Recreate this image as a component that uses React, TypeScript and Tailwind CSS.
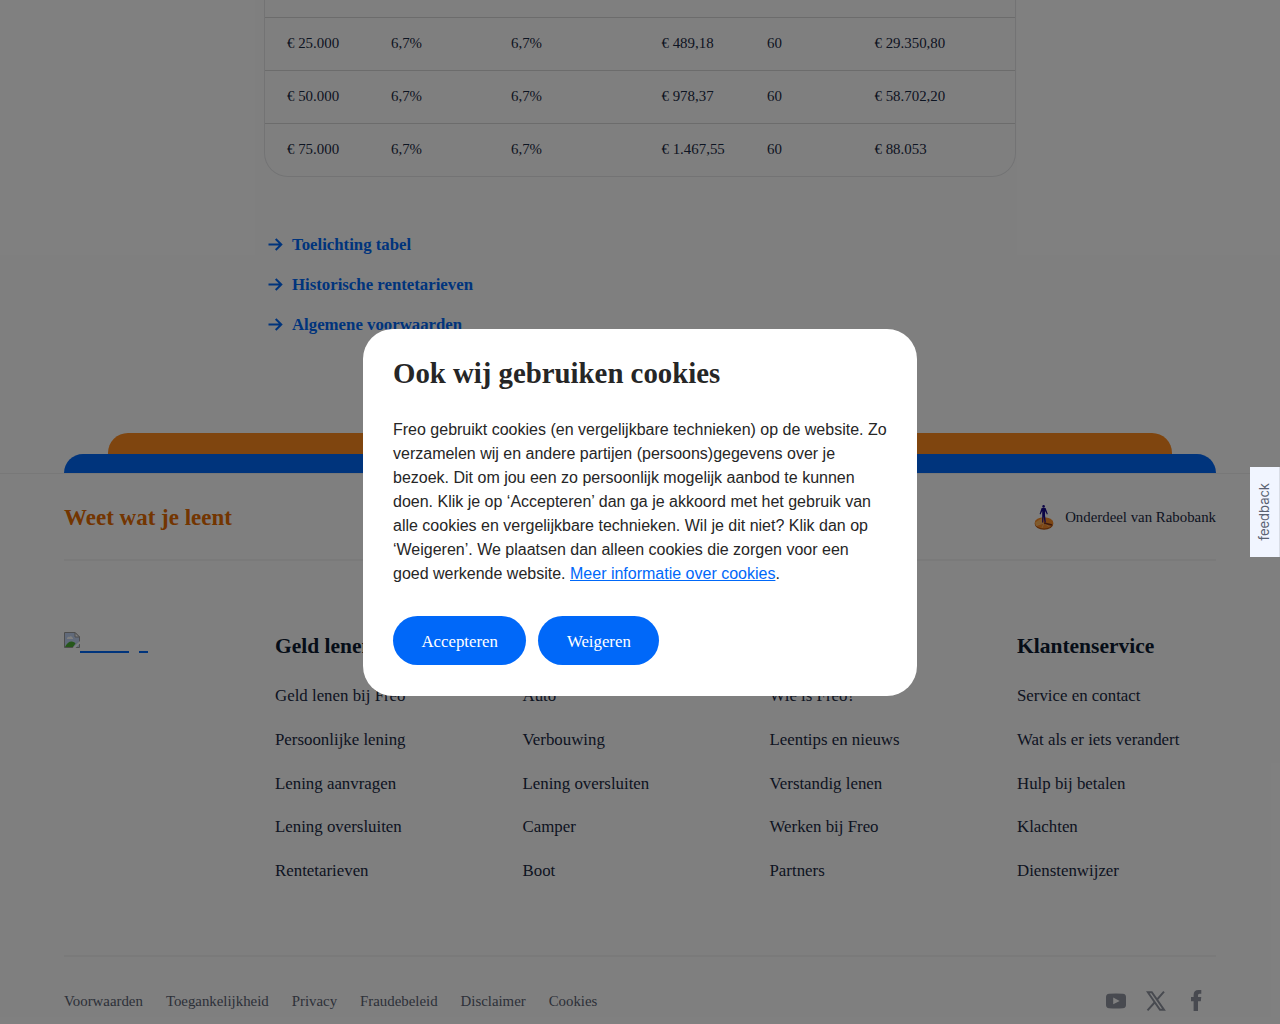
import React from "react";

const rows = [
  ["€ 25.000", "6,7%", "6,7%", "€ 489,18", "60", "€ 29.350,80"],
  ["€ 50.000", "6,7%", "6,7%", "€ 978,37", "60", "€ 58.702,20"],
  ["€ 75.000", "6,7%", "6,7%", "€ 1.467,55", "60", "€ 88.053"],
];

const links = ["Toelichting tabel", "Historische rentetarieven", "Algemene voorwaarden"];

const columns = [
  { title: "Geld lenen", items: ["Geld lenen bij Freo", "Persoonlijke lening", "Lening aanvragen", "Lening oversluiten", "Rentetarieven"] },
  { title: "Leendoelen", items: ["Auto", "Verbouwing", "Lening oversluiten", "Camper", "Boot"] },
  { title: "Over Freo", items: ["Wie is Freo?", "Leentips en nieuws", "Verstandig lenen", "Werken bij Freo", "Partners"] },
  { title: "Klantenservice", items: ["Service en contact", "Wat als er iets verandert", "Hulp bij betalen", "Klachten", "Dienstenwijzer"] },
];

const legal = ["Voorwaarden", "Toegankelijkheid", "Privacy", "Fraudebeleid", "Disclaimer", "Cookies"];

function Arrow() {
  return (
    <svg width="16" height="14" viewBox="0 0 16 14" fill="none" stroke="#0068f9" strokeWidth="2">
      <path d="M0.5 6.5H13.5M7.7 1L13.3 6.5L7.7 12" />
    </svg>
  );
}

function RabobankLogo() {
  return (
    <svg width="20" height="26" viewBox="0 0 20 26">
      <ellipse cx="10" cy="18.8" rx="9.3" ry="6" fill="#b4520e" />
      <ellipse cx="10" cy="17.8" rx="9.3" ry="5.6" fill="#fb8c28" />
      <path d="M1.2 17.5L8 13L8.5 18L2 21Z" fill="#ffb75c" />
      <path d="M10 18L15.5 22M10 18L8 23M10 18L2.5 20.5" stroke="#ffc68a" strokeWidth="0.6" />
      <path d="M10 18L18 20" stroke="#7b3018" strokeWidth="1.6" />
      <circle cx="9.6" cy="1.4" r="1.3" fill="#180a8c" />
      <path d="M7.6 3H11.6L13.8 9L12.9 9.6L11.2 6L11 10L11.8 17.5H10.6L9.6 11.5L9.1 17.5H8.2L8.2 10V6L6.5 9.6L5.6 9Z" fill="#180a8c" />
    </svg>
  );
}

function MissingImage() {
  return (
    <svg width="16" height="16" viewBox="0 0 16 16">
      <path d="M0.5 0.5H11L15.5 5V15.5H0.5Z" fill="#c2d5f5" stroke="#9a9a9a" />
      <path d="M3 6.5C3 4.8 5 4.6 5.4 5C6 3.6 8 4 8.2 5.6C9 5.6 9.2 6.5 9 7H3Z" fill="#fff" />
      <path d="M1 15C2.5 11.5 5 9.5 7.5 9.5C9.5 9.5 11 10.5 11.5 11.5L9 15Z" fill="#4caf36" />
      <path d="M11 0.5V5H15.5Z" fill="#fff" stroke="#9a9a9a" />
      <path d="M8.5 16L16 9V11.5L11.5 16Z" fill="#fff" />
    </svg>
  );
}

export default function App() {
  return (
    <div className="relative h-[1024px] w-[1280px] overflow-hidden bg-white font-['Liberation_Serif',serif] text-[#1b2a44]">
      <section className="h-[473px]">
        <div className="mx-auto h-[177px] w-[752px] overflow-hidden rounded-b-3xl border border-t-0 border-[#e6e7e9]">
          <div className="h-[17px]" />
          {rows.map((row) => (
            <div
              key={row[0]}
              className="grid h-[53px] grid-cols-[104px_120px_150.5px_105.5px_107.5px_1fr] items-center border-t border-[#d8d8d8] pb-0.5 pl-[22px] text-[14.9px] leading-6"
            >
              {row.map((cell, i) => (
                <span key={i}>{cell}</span>
              ))}
            </div>
          ))}
        </div>
        <div className="mt-[48px] flex flex-col pl-[268px]">
          {links.map((l) => (
            <a key={l} className="flex h-10 items-center gap-2 text-[16.8px] font-bold text-[#0068f9]">
              <Arrow />
              <span>{l}</span>
            </a>
          ))}
        </div>
        <div className="mx-[108px] mt-[88px] h-[20.5px] rounded-t-[20px] bg-[#ff8a1e]" />
        <div className="mx-16 h-[19.5px] rounded-t-[20px] bg-[#0068f9]" />
      </section>

      <footer className="h-[551px] border-t border-[#f0f0f0] px-16">
        <div className="flex h-[87px] items-center justify-between border-b-2 border-[#f5f5f5]">
          <h2 className="pt-[3px] text-[23px] font-bold text-[#e66a00]">Weet wat je leent</h2>
          <div className="flex items-center gap-[11px] pt-0.5 text-[14.85px]">
            <RabobankLogo />
            <span>Onderdeel van Rabobank</span>
          </div>
        </div>
        <div className="grid h-[396px] grid-cols-[211px_247.5px_247px_247.5px_1fr] border-b-2 border-[#f5f5f5] pt-[70px]">
          <div className="flex items-start pt-px">
            <MissingImage />
            <div className="mt-[19px] flex gap-[10px]">
              <div className="h-[1.5px] w-[49px] bg-[#0068f9]" />
              <div className="h-[1.5px] w-[9px] bg-[#0068f9]" />
            </div>
          </div>
          {columns.map((c) => (
            <div key={c.title} className="whitespace-nowrap">
              <h3 className="text-[21.5px] leading-[30px] font-bold text-[#0c1a30]">{c.title}</h3>
              <ul className="mt-[13px] text-[16.85px]">
                {c.items.map((it) => (
                  <li key={it} className="flex h-[43.7px] items-center">{it}</li>
                ))}
              </ul>
            </div>
          ))}
        </div>
        <div className="flex h-[88px] items-center justify-between text-[14.85px] text-[#5a6272]">
          <div className="flex gap-[23px]">
            {legal.map((l) => (
              <span key={l}>{l}</span>
            ))}
          </div>
          <div className="flex items-center pr-[14px] pb-px text-[#9095a0]">
            <svg width="20" height="16" viewBox="0 0 20 16" fill="currentColor">
              <path fillRule="evenodd" d="M3 .8Q10 0 17 .8Q20 1 20 4V12Q20 15 17 15.2Q10 16 3 15.2Q0 15 0 12V4Q0 1 3 .8ZM7.2 4.5V11.2L13.7 7.9Z" />
            </svg>
            <svg className="ml-5" width="20" height="20" viewBox="0 0 20 20" fill="none" stroke="currentColor">
              <path d="M1.8 1.2H5.8L18 18.8H14Z" strokeWidth="2" />
              <path d="M18 .7L11 8.7M8.6 11.5L1.5 19.3" strokeWidth="2" />
            </svg>
            <svg className="ml-[25px]" width="11" height="21" viewBox="0 0 11 21" fill="currentColor">
              <path d="M2.6 21V11.2H0V7H2.6V5Q2.6 0 7.5 0H10.3V3.8H8.4Q7 3.8 7 5.3V7H10.3L9.8 11.2H7V21Z" />
            </svg>
          </div>
        </div>
      </footer>

      <div className="absolute inset-0 flex items-center justify-center bg-black/50 pt-[0.5px]">
        <div className="h-[367.5px] w-[554px] rounded-[30px] bg-white px-[30px] pt-[29px] text-[#262626]">
          <h1 className="text-[28.8px] leading-[30px] font-bold">Ook wij gebruiken cookies</h1>
          <p className="mt-[30px] font-['Liberation_Sans',sans-serif] text-base leading-6">
            Freo gebruikt cookies (en vergelijkbare technieken) op de website. Zo verzamelen wij en andere partijen
            (persoons)gegevens over je bezoek. Dit om jou een zo persoonlijk mogelijk aanbod te kunnen doen. Klik je op
            ‘Accepteren’ dan ga je akkoord met het gebruik van alle cookies en vergelijkbare technieken. Wil je dit
            niet? Klik dan op ‘Weigeren’. We plaatsen dan alleen cookies die zorgen voor een goed werkende website.{" "}
            <a className="text-[#0068f9] underline">Meer informatie over cookies</a>.
          </p>
          <div className="mt-[30px] flex gap-3 text-[16.8px] text-white">
            <button className="h-[49.5px] rounded-full bg-[#0068f9] px-[28.5px] pt-[3px]">Accepteren</button>
            <button className="h-[49.5px] rounded-full bg-[#0068f9] px-[28.5px] pt-[3px]">Weigeren</button>
          </div>
        </div>
      </div>

      <div className="absolute top-[467px] right-0 flex h-[90px] w-[30px] items-center justify-center border-r border-[#d9dde6] bg-[#f1f5ff]">
        <span className="rotate-180 font-['Inter',sans-serif] text-[13px] leading-none text-[#5a6272] [writing-mode:vertical-rl]">feedback</span>
      </div>
    </div>
  );
}
